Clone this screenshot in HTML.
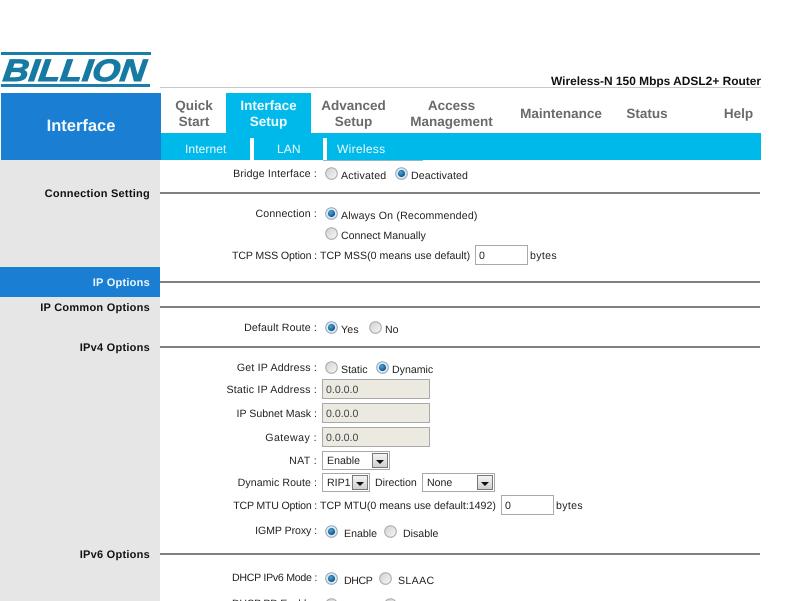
<!DOCTYPE html>
<html><head><meta charset="utf-8"><style>
html,body{margin:0;padding:0;background:#fff;width:793px;height:601px;overflow:hidden}
body{position:relative;font-family:"Liberation Sans",Arial,sans-serif;font-size:10.6px;color:#222;text-rendering:geometricPrecision}
.a,.r,.c,.b,.sel,.in,.h,.s,.t{position:absolute}
.t{white-space:nowrap;line-height:12px;margin-top:1px}
.r{white-space:nowrap;line-height:12px;text-align:right;margin-top:1px;right:476px}
.s{font-weight:bold;font-size:11px;text-align:right;right:643px;color:#111;line-height:13px;white-space:nowrap;letter-spacing:.25px;margin-top:1px}
.h{left:160px;width:600px;height:2px;background:#808080}
.m{position:absolute;font-weight:bold;font-size:13.5px;color:#6a6a6a;text-align:center;line-height:16px;white-space:nowrap}
.in{box-sizing:border-box;border:1px solid #a9a9a9;background:#fff;height:20px;padding:4px 0 0 3px;line-height:12px;color:#222}
.in.d{background:#ece9e0;color:#444;height:20px;width:108px;left:322px}
.sel{box-sizing:border-box;border:1px solid #a9a9a9;height:19px;background:#fff;padding:3px 0 0 4px;line-height:12px}
.sel i{position:absolute;right:1px;top:1px;width:16px;height:15px;box-sizing:border-box;border:1px solid #777;background:linear-gradient(#f4f4f4,#cfcfcf)}
.sel i:after{content:"";position:absolute;left:3px;top:6px;border:4px solid transparent;border-top:4px solid #111;border-bottom:0}
svg.ra{position:absolute;width:13px;height:13px}
</style></head><body>
<svg width="0" height="0" style="position:absolute"><defs>
<linearGradient id="g" x1="0" y1="0" x2="1" y2="1"><stop offset="0" stop-color="#d0d0d0"/><stop offset="1" stop-color="#f8f8f8"/></linearGradient>
<radialGradient id="bl" cx=".4" cy=".35" r=".7"><stop offset="0" stop-color="#4aa6d8"/><stop offset="1" stop-color="#0c4a80"/></radialGradient>
<symbol id="off" viewBox="0 0 13 13"><circle cx="6.5" cy="6.5" r="5.8" fill="url(#g)" stroke="#a8a8a8"/></symbol>
<symbol id="on" viewBox="0 0 13 13"><circle cx="6.5" cy="6.5" r="5.8" fill="#dfeaf2" stroke="#8fa8bc"/><circle cx="6.5" cy="6.5" r="3.6" fill="url(#bl)"/></symbol>
</defs></svg>

<!-- logo -->
<div class="a" style="left:1px;top:52px;width:150px;height:3px;background:#1a7ea6"></div>
<div class="a" style="left:1px;top:84px;width:149px;height:3px;background:#1a7ea6"></div>
<div class="a" style="left:2px;top:53px;font:italic bold 31px/36px 'Liberation Sans',sans-serif;color:#167aa3;-webkit-text-stroke:1px #167aa3;transform-origin:0 29px;transform:scaleX(1.15) skewX(-6deg);white-space:nowrap">BILLION</div>

<div class="a" style="left:551px;top:74px;font-size:11.95px;font-weight:bold;line-height:14px;color:#111;white-space:nowrap">Wireless-N 150 Mbps ADSL2+ Router</div>
<div class="a" style="left:160px;top:87px;width:601px;height:1px;background:#c8c8c8"></div>

<!-- header -->
<div class="a" style="left:1px;top:93px;width:160px;height:67px;background:#1a7fd3"></div>
<div class="a" style="left:1px;top:117px;width:160px;text-align:center;font-weight:bold;font-size:16.5px;line-height:18px;color:#f2f8fd">Interface</div>
<div class="a" style="left:226px;top:93px;width:85px;height:41px;background:#00b9eb"></div>
<div class="a" style="left:161px;top:133px;width:600px;height:27px;background:#00b9eb"></div>

<div class="m" style="left:161px;top:98px;width:66px">Quick<br>Start</div>
<div class="m" style="left:226px;top:98px;width:85px;color:#eef9fd">Interface<br>Setup</div>
<div class="m" style="left:311px;top:98px;width:85px">Advanced<br>Setup</div>
<div class="m" style="left:405px;top:98px;width:93px">Access<br>Management</div>
<div class="m" style="left:515px;top:106px;width:92px">Maintenance</div>
<div class="m" style="left:620px;top:106px;width:54px">Status</div>
<div class="m" style="left:712px;top:106px;width:53px">Help</div>

<div class="a" style="left:185px;top:142px;font-size:12px;line-height:14px;color:#eefafe;letter-spacing:.1px">Internet</div>
<div class="a" style="left:277px;top:142px;font-size:12px;line-height:14px;color:#eefafe;letter-spacing:.1px">LAN</div>
<div class="a" style="left:337px;top:142px;font-size:12px;line-height:14px;color:#eefafe;letter-spacing:.3px">Wireless</div>
<div class="a" style="left:250px;top:138px;width:4px;height:22px;background:#fff"></div>
<div class="a" style="left:323px;top:138px;width:4px;height:22px;background:#fff"></div>
<div class="a" style="left:323px;top:160px;width:100px;height:1px;background:#8fb8c8"></div>

<!-- sidebar -->
<div class="a" style="left:0;top:160px;width:160px;height:441px;background:#e6e6e6"></div>
<div class="a" style="left:0;top:267px;width:160px;height:30px;background:#1a7fd3"></div>
<div class="s" style="top:187px">Connection Setting</div>
<div class="s" style="top:276px;color:#eef6fc">IP Options</div>
<div class="s" style="top:301px">IP Common Options</div>
<div class="s" style="top:341px">IPv4 Options</div>
<div class="s" style="top:548px">IPv6 Options</div>

<div class="h" style="top:192px"></div>
<div class="h" style="top:281px"></div>
<div class="h" style="top:306px"></div>
<div class="h" style="top:346px"></div>
<div class="h" style="top:553px"></div>

<!-- connection setting -->
<div class="r" style="top:167px;letter-spacing:.18px">Bridge Interface :</div>
<svg class="ra" style="left:325px;top:167px"><use href="#off"/></svg>
<div class="t" style="left:341px;top:169px;letter-spacing:.2px">Activated</div>
<svg class="ra" style="left:395px;top:167px"><use href="#on"/></svg>
<div class="t" style="left:411px;top:169px;letter-spacing:.1px">Deactivated</div>

<div class="r" style="top:207px;letter-spacing:.17px">Connection :</div>
<svg class="ra" style="left:325px;top:207px"><use href="#on"/></svg>
<div class="t" style="left:341px;top:209px;letter-spacing:.18px">Always On (Recommended)</div>
<svg class="ra" style="left:325px;top:227px"><use href="#off"/></svg>
<div class="t" style="left:341px;top:229px">Connect Manually</div>

<div class="r" style="top:249px;letter-spacing:-.12px">TCP MSS Option :</div>
<div class="t" style="left:320px;top:249px;letter-spacing:.03px">TCP MSS(0 means use default)</div>
<div class="in" style="left:475px;top:245px;width:53px">0</div>
<div class="t" style="left:530px;top:249px;letter-spacing:.35px">bytes</div>

<div class="r" style="top:321px;letter-spacing:.15px">Default Route :</div>
<svg class="ra" style="left:325px;top:321px"><use href="#on"/></svg>
<div class="t" style="left:341px;top:323px;letter-spacing:.2px">Yes</div>
<svg class="ra" style="left:369px;top:321px"><use href="#off"/></svg>
<div class="t" style="left:385px;top:323px">No</div>

<!-- ipv4 -->
<div class="r" style="top:361px;letter-spacing:.2px">Get IP Address :</div>
<svg class="ra" style="left:325px;top:361px"><use href="#off"/></svg>
<div class="t" style="left:341px;top:363px">Static</div>
<svg class="ra" style="left:376px;top:361px"><use href="#on"/></svg>
<div class="t" style="left:392px;top:363px">Dynamic</div>

<div class="r" style="top:383px;letter-spacing:.22px">Static IP Address :</div>
<div class="in d" style="top:379px">0.0.0.0</div>
<div class="r" style="top:407px">IP Subnet Mask :</div>
<div class="in d" style="top:403px">0.0.0.0</div>
<div class="r" style="top:431px;letter-spacing:.45px">Gateway :</div>
<div class="in d" style="top:427px">0.0.0.0</div>

<div class="r" style="top:454px;letter-spacing:.35px">NAT :</div>
<div class="sel" style="left:322px;top:451px;width:68px">Enable<i></i></div>
<div class="r" style="top:476px;letter-spacing:.07px">Dynamic Route :</div>
<div class="sel" style="left:322px;top:473px;width:48px">RIP1<i></i></div>
<div class="t" style="left:375px;top:476px">Direction</div>
<div class="sel" style="left:422px;top:473px;width:73px">None<i></i></div>

<div class="r" style="top:499px;letter-spacing:-.2px">TCP MTU Option :</div>
<div class="t" style="left:320px;top:499px">TCP MTU(0 means use default:1492)</div>
<div class="in" style="left:501px;top:495px;width:53px">0</div>
<div class="t" style="left:556px;top:499px;letter-spacing:.35px">bytes</div>

<div class="r" style="top:524px;letter-spacing:-.08px">IGMP Proxy :</div>
<svg class="ra" style="left:325px;top:525px"><use href="#on"/></svg>
<div class="t" style="left:344px;top:527px">Enable</div>
<svg class="ra" style="left:384px;top:525px"><use href="#off"/></svg>
<div class="t" style="left:403px;top:527px">Disable</div>

<!-- ipv6 -->
<div class="r" style="top:571px;letter-spacing:-.27px">DHCP IPv6 Mode :</div>
<svg class="ra" style="left:325px;top:572px"><use href="#on"/></svg>
<div class="t" style="left:344px;top:574px;letter-spacing:-.4px">DHCP</div>
<svg class="ra" style="left:379px;top:572px"><use href="#off"/></svg>
<div class="t" style="left:398px;top:574px;letter-spacing:.35px">SLAAC</div>

<div class="r" style="top:597px;letter-spacing:-.27px">DHCP PD Enable :</div>
<svg class="ra" style="left:325px;top:598px"><use href="#off"/></svg>
<svg class="ra" style="left:384px;top:598px"><use href="#off"/></svg>
</body></html>
